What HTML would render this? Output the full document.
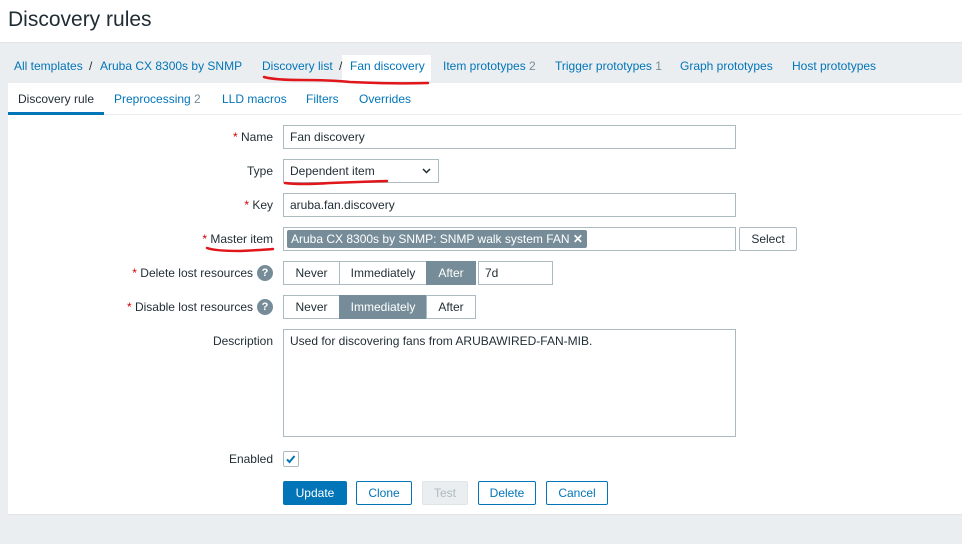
<!DOCTYPE html>
<html><head><style>
*{box-sizing:border-box;margin:0;padding:0}
body{width:962px;height:544px;background:#ebeef0;font-family:"Liberation Sans",Arial,sans-serif;font-size:12px;color:#1f2c33;position:relative;overflow:hidden}
.a{position:absolute}
.hdr{left:0;top:0;width:962px;height:43px;background:#fff;border-bottom:1px solid #dfe4e7}
.hdr h1{position:absolute;left:8px;top:8px;font-size:21px;font-weight:normal;color:#1f2c33}
.link{color:#0275b8}
.gray{color:#768d99}
.panel{left:8px;top:83px;width:954px;height:432px;background:#fff;border-bottom:1px solid #dfe4e7}
.tabline{left:8px;top:114px;width:954px;height:1px;background:#ebeef0}
.lbl{text-align:right;width:200px;left:73px}
.req{color:#d40000}
.inp{border:1px solid #acbbc2;background:#fff;height:24px;padding:4px 6px;line-height:14px}
.btn{height:24px;border:1px solid #0275b8;color:#0275b8;background:#fff;text-align:center;line-height:22px;border-radius:2px}
.seg{height:24px;border:1px solid #acbbc2;text-align:center;line-height:22px;color:#1f2c33}
.on{background:#768d99;color:#fff;border-color:#768d99}
.q{width:16px;height:16px;border-radius:50%;background:#768d99;color:#fff;font-weight:bold;font-size:11px;text-align:center;line-height:16px}
</style></head><body>
<div class="a hdr"><h1>Discovery rules</h1></div>
<div class="a" style="left:342px;top:55px;width:89px;height:26px;background:#fff"></div>
<div class="a link" style="left:14px;top:59px">All templates</div>
<div class="a" style="left:89px;top:59px">/</div>
<div class="a link" style="left:100px;top:59px">Aruba CX 8300s by SNMP</div>
<div class="a link" style="left:262px;top:59px">Discovery list</div>
<div class="a" style="left:339px;top:59px">/</div>
<div class="a link" style="left:350px;top:59px">Fan discovery</div>
<div class="a link" style="left:443px;top:59px">Item prototypes <span class="gray">2</span></div>
<div class="a link" style="left:555px;top:59px">Trigger prototypes <span class="gray">1</span></div>
<div class="a link" style="left:680px;top:59px">Graph prototypes</div>
<div class="a link" style="left:792px;top:59px">Host prototypes</div>
<div class="a panel"></div>
<div class="a tabline"></div>
<div class="a" style="left:18px;top:92px">Discovery rule</div>
<div class="a" style="left:8px;top:112px;width:96px;height:3px;background:#0275b8"></div>
<div class="a link" style="left:114px;top:92px">Preprocessing <span class="gray">2</span></div>
<div class="a link" style="left:222px;top:92px">LLD macros</div>
<div class="a link" style="left:306px;top:92px">Filters</div>
<div class="a link" style="left:359px;top:92px">Overrides</div>

<div class="a lbl" style="top:130px"><span class="req">*</span> Name</div>
<div class="a inp" style="left:283px;top:125px;width:453px">Fan discovery</div>
<div class="a lbl" style="top:164px">Type</div>
<div class="a inp" style="left:283px;top:159px;width:156px">Dependent item<svg style="position:absolute;right:7px;top:8px" width="9" height="6" viewBox="0 0 9 6"><path d="M1 1l3.5 3.5L8 1" stroke="#1f2c33" stroke-width="1.5" fill="none"/></svg></div>
<div class="a lbl" style="top:198px"><span class="req">*</span> Key</div>
<div class="a inp" style="left:283px;top:193px;width:453px">aruba.fan.discovery</div>
<div class="a lbl" style="top:232px"><span class="req">*</span> Master item</div>
<div class="a inp" style="left:283px;top:227px;width:453px;padding:2px 3px"><span style="display:inline-block;background:#768d99;color:#fff;padding:2px 4px;line-height:14px;border-radius:2px">Aruba CX 8300s by SNMP: SNMP walk system FAN <b>✕</b></span></div>
<div class="a btn" style="left:739px;top:227px;width:58px;border-color:#acbbc2;color:#1f2c33">Select</div>
<div class="a lbl" style="top:266px;width:180px"><span class="req">*</span> Delete lost resources</div>
<div class="a q" style="left:257px;top:265px">?</div>
<div class="a seg" style="left:283px;top:261px;width:57px">Never</div>
<div class="a seg" style="left:339px;top:261px;width:88px">Immediately</div>
<div class="a seg on" style="left:426px;top:261px;width:50px">After</div>
<div class="a inp" style="left:478px;top:261px;width:75px">7d</div>
<div class="a lbl" style="top:300px;width:180px"><span class="req">*</span> Disable lost resources</div>
<div class="a q" style="left:257px;top:299px">?</div>
<div class="a seg" style="left:283px;top:295px;width:57px">Never</div>
<div class="a seg on" style="left:339px;top:295px;width:88px">Immediately</div>
<div class="a seg" style="left:426px;top:295px;width:50px">After</div>
<div class="a lbl" style="top:334px">Description</div>
<div class="a inp" style="left:283px;top:329px;width:453px;height:108px">Used for discovering fans from ARUBAWIRED-FAN-MIB.</div>
<div class="a lbl" style="top:452px">Enabled</div>
<div class="a" style="left:283px;top:451px;width:16px;height:16px;border:1px solid #acbbc2;border-radius:2px"><svg width="14" height="14" viewBox="0 0 14 14"><path d="M3 7.5l2.5 2.5 5-6" stroke="#0275b8" stroke-width="2" fill="none"/></svg></div>
<div class="a btn" style="left:283px;top:481px;width:64px;background:#0275b8;color:#fff">Update</div>
<div class="a btn" style="left:356px;top:481px;width:56px">Clone</div>
<div class="a btn" style="left:422px;top:481px;width:46px;border-color:#dfe4e7;background:#ebeef0;color:#acbbc2">Test</div>
<div class="a btn" style="left:478px;top:481px;width:58px">Delete</div>
<div class="a btn" style="left:546px;top:481px;width:62px">Cancel</div>
<svg class="a" style="left:0;top:0" width="962" height="544">
<g stroke="#e0161b" stroke-width="2.5" fill="none" stroke-linecap="round">
<path d="M264 77Q275 80 300 80Q330 80 350 82Q390 84 428 83"/>
<path d="M285 183Q300 185 330 183Q360 182 387 181"/>
<path d="M207 248Q215 251 240 251Q262 250 273 249"/>
</g></svg>
</body></html>
